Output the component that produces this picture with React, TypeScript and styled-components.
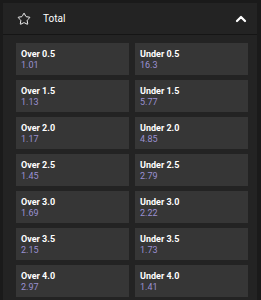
import React from "react"
import styled, { createGlobalStyle } from "styled-components"
import { Star, ChevronUp } from "lucide-react"

const GlobalStyle = createGlobalStyle`
  body {
    margin: 0;
    background: #1a1a1a;
    font-family: Roboto, "Liberation Sans", sans-serif;
  }
`

const Panel = styled.div`
  margin: 3px 4px 0 3px;
  background: #232323;
  height: 297px;
  overflow: hidden;
`

const Header = styled.div`
  display: flex;
  align-items: center;
  height: 31px;
  padding: 0 8px 0 14px;
  border-bottom: 1px solid #151515;
  color: #fff;
`

const Title = styled.span`
  font-size: 10px;
  margin-left: 12px;
  flex: 1;
`

const Grid = styled.div`
  display: grid;
  grid-template-columns: 113px 113px;
  column-gap: 6px;
  row-gap: 5px;
  padding: 8px 0 0 13px;
`

const Card = styled.div`
  background: #363636;
  height: 32px;
  padding: 6px 5px 0;
  box-sizing: border-box;
`

const Label = styled.div`
  color: #fff;
  font-size: 9px;
  font-weight: 700;
  line-height: 10.5px;
`

const Odds = styled.div`
  color: #9a91d2;
  font-size: 9px;
  line-height: 10.5px;
  margin-top: 0.5px;
`

const rows: [string, string, string][] = [
  ["0.5", "1.01", "16.3"],
  ["1.5", "1.13", "5.77"],
  ["2.0", "1.17", "4.85"],
  ["2.5", "1.45", "2.79"],
  ["3.0", "1.69", "2.22"],
  ["3.5", "2.15", "1.73"],
  ["4.0", "2.97", "1.41"],
]

export default function App() {
  return (
    <>
      <GlobalStyle />
      <Panel>
        <Header>
          <Star size={14} strokeWidth={1.6} />
          <Title>Total</Title>
          <ChevronUp size={16} strokeWidth={3.4} />
        </Header>
        <Grid>
          {rows.map(([line, over, under]) => (
            <React.Fragment key={line}>
              <Card>
                <Label>Over {line}</Label>
                <Odds>{over}</Odds>
              </Card>
              <Card>
                <Label>Under {line}</Label>
                <Odds>{under}</Odds>
              </Card>
            </React.Fragment>
          ))}
        </Grid>
      </Panel>
    </>
  )
}
